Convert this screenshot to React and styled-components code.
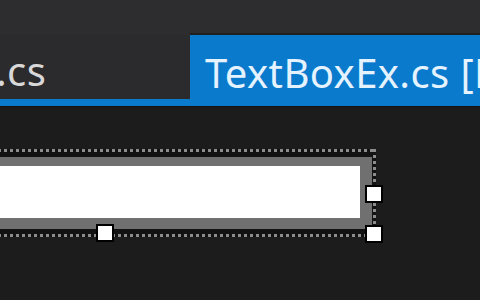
import React from "react";
import styled, { createGlobalStyle } from "styled-components";

const GlobalStyle = createGlobalStyle`
  html, body {
    margin: 0;
    padding: 0;
    background: #1c1c1c;
  }
  body {
    width: 480px;
    height: 300px;
    overflow: hidden;
    font-family: "Noto Sans", "Open Sans", sans-serif;
  }
`;

const Screen = styled.div`
  width: 480px;
  height: 300px;
  display: flex;
  flex-direction: column;
  overflow: hidden;
  background: #1c1c1c;
`;

const TabWell = styled.div`
  display: flex;
  flex-direction: column;
  background: #2d2d30;
  border-bottom: 1px solid #121212;
`;

const TabRow = styled.div`
  height: 99px;
  display: flex;
  align-items: flex-end;
`;

const Tab = styled.div`
  height: ${(p) => (p.active ? "66px" : "64px")};
  width: ${(p) => (p.active ? "auto" : "190px")};
  flex: ${(p) => (p.active ? "1" : "none")};
  box-sizing: border-box;
  padding: ${(p) => (p.active ? "18px 0 0 15px" : "16px 0 0 0")};
  background: ${(p) => (p.active ? "#0a7acc" : "#2b2a2d")};
  border-top: ${(p) => (p.active ? "2px solid #1f1f22" : "none")};
  color: ${(p) => (p.active ? "#e4f3ff" : "#d8d8d8")};
  font-size: 40px;
  line-height: 1;
  white-space: nowrap;
  overflow: hidden;
`;

const Label = styled.span`
  display: inline-block;
  margin-left: ${(p) => p.shift || "0"};
  letter-spacing: 0.4px;
`;

const AccentLine = styled.div`
  height: 7px;
  background: #0a7acc;
`;

const Canvas = styled.div`
  flex: 1;
  padding-top: 42px;
`;

const SelectionFrame = styled.div`
  position: relative;
  width: 396px;
  height: 88px;
  margin-left: -20px;
  box-sizing: border-box;
  padding: 8px 4px 8px 0;
  background:
    repeating-linear-gradient(90deg, #8c8c8c 0 3px, transparent 3px 6px) top left / 100% 3px no-repeat,
    repeating-linear-gradient(90deg, #8c8c8c 0 3px, transparent 3px 6px) bottom left / 100% 3px no-repeat,
    repeating-linear-gradient(180deg, #8c8c8c 0 3px, transparent 3px 6px) top right / 3px 100% no-repeat,
    #121212;
`;

const TextBoxBorder = styled.div`
  height: 100%;
  box-sizing: border-box;
  border-style: solid;
  border-color: #707070;
  border-width: 9px 12px 11px 0;
  background: #ffffff;
`;

const Handle = styled.div`
  position: absolute;
  width: 18px;
  height: 18px;
  box-sizing: border-box;
  border: 2px solid #000;
  background: #fff;
  top: ${(p) => p.top}px;
  ${(p) => (p.left !== undefined ? `left: ${p.left}px;` : `right: ${p.right}px;`)}
`;

export default function App() {
  return (
    <Screen>
      <GlobalStyle />
      <TabWell>
        <TabRow>
          <Tab>
            <Label shift="-4px">.cs</Label>
          </Tab>
          <Tab active>
            <Label>TextBoxEx.cs [Design]</Label>
          </Tab>
        </TabRow>
        <AccentLine />
      </TabWell>
      <Canvas>
        <SelectionFrame>
          <TextBoxBorder />
          <Handle top={36} right={-7} />
          <Handle top={76} right={-7} />
          <Handle top={75} left={116} />
        </SelectionFrame>
      </Canvas>
    </Screen>
  );
}
